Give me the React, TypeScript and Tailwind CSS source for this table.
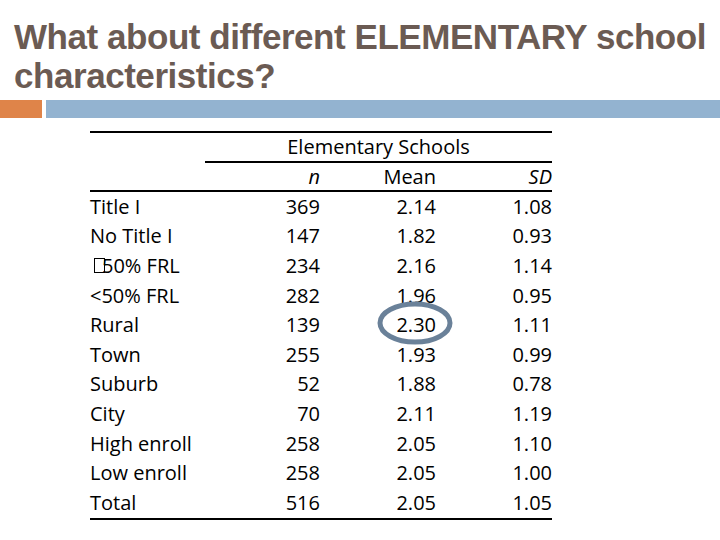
import React from "react";

const rows: [string, string, string, string][] = [
  ["Title I", "369", "2.14", "1.08"],
  ["No Title I", "147", "1.82", "0.93"],
  ["FRL_GE", "234", "2.16", "1.14"],
  ["<50% FRL", "282", "1.96", "0.95"],
  ["Rural", "139", "2.30", "1.11"],
  ["Town", "255", "1.93", "0.99"],
  ["Suburb", "52", "1.88", "0.78"],
  ["City", "70", "2.11", "1.19"],
  ["High enroll", "258", "2.05", "1.10"],
  ["Low enroll", "258", "2.05", "1.00"],
  ["Total", "516", "2.05", "1.05"],
];

export default function App() {
  return (
    <div className="w-[720px] h-[540px] bg-white overflow-hidden relative">
      <div
        className="pl-[14px] pt-[17px] text-[35px] leading-[39px] font-bold text-[#6b5b53] tracking-[-0.45px]"
        style={{ fontFamily: '"Liberation Sans", Arial, sans-serif' }}
      >
        <div>What about different ELEMENTARY school</div>
        <div>characteristics?</div>
      </div>
      <div className="flex mt-[5px] h-[18px]">
        <div className="w-[42px] bg-[#df8449]" />
        <div className="ml-[4px] flex-1 bg-[#93b3d0]" />
      </div>
      <div
        className="ml-[90px] mt-[13px] w-[462px] text-[20px] text-black relative"
        style={{ fontFamily: '"Open Sans", Lato, sans-serif' }}
      >
        <div className="border-t-2 border-black" />
        <div className="grid grid-cols-[115px_347px] h-[28px] items-center">
          <div />
          <div className="text-center leading-none">Elementary Schools</div>
        </div>
        <div className="grid grid-cols-[115px_347px]">
          <div />
          <div className="border-t-2 border-black" />
        </div>
        <div className="grid grid-cols-[115px_115px_116px_116px] h-[27px] items-center leading-none">
          <div />
          <div className="text-right italic">n</div>
          <div className="text-right">Mean</div>
          <div className="text-right italic">SD</div>
        </div>
        <div className="border-t-2 border-black" />
        {rows.map((r, i) => (
          <div
            key={i}
            className="grid grid-cols-[115px_115px_116px_116px] h-[29.6px] items-center leading-none"
          >
            <div className="whitespace-nowrap">
              {r[0] === "FRL_GE" ? (
                <span className="inline-flex items-center">
                  <span className="inline-block w-[11px] h-[15px] border-[1.5px] border-black ml-[4px] mr-[-3px] relative z-10" />
                  <span>50% FRL</span>
                </span>
              ) : (
                r[0]
              )}
            </div>
            <div className="text-right">{r[1]}</div>
            <div className="text-right">{r[2]}</div>
            <div className="text-right">{r[3]}</div>
          </div>
        ))}
        <div className="border-t-2 border-black" />
        <svg
          className="absolute left-[286px] top-[170px]"
          width="78"
          height="46"
          viewBox="0 0 78 46"
        >
          <ellipse cx="39" cy="22" rx="35" ry="19" fill="none" stroke="#6a8199" strokeWidth="5" />
        </svg>
      </div>
    </div>
  );
}
